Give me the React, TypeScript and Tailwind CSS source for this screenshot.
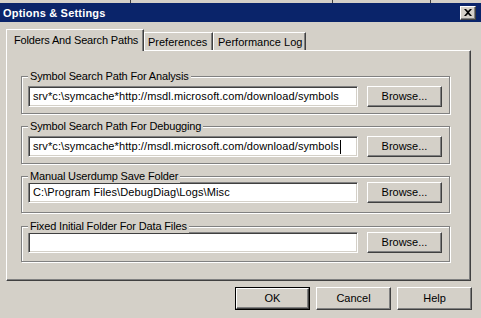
import { ReactNode } from "react";

const raised =
  "border border-t-white border-l-white border-r-[#404040] border-b-[#404040] shadow-[inset_-1px_-1px_0_#808080]";
const sunken =
  "border border-t-[#808080] border-l-[#808080] border-r-white border-b-white shadow-[inset_1px_1px_0_#404040,inset_-1px_-1px_0_#d4d0c8]";

const Button = ({ children, className = "" }: { children: ReactNode; className?: string }) => (
  <div className={`flex items-center justify-center bg-[#d4d0c8] text-black ${raised} ${className}`}>
    {children}
  </div>
);

type GroupProps = {
  label: string;
  value?: string;
  caret?: boolean;
  className: string;
};

const Group = ({ label, value, caret, className }: GroupProps) => (
  <div
    className={`relative ml-[14px] w-[429px] border border-[#808080] px-[6px] pr-[7px] shadow-[inset_1px_1px_0_#fff,1px_1px_0_#fff] ${className}`}
  >
    <span className="absolute left-[6px] -top-[7px] bg-[#d4d0c8] px-[2px] leading-[13px] tracking-[-0.15px]">
      {label}
    </span>
    <div className="flex items-center gap-[9px]">
      <div className={`flex h-[21px] w-[330px] items-center bg-white pl-[4px] ${sunken}`}>
        <span className="whitespace-nowrap tracking-[0.1px]">{value}</span>
        {caret && <span className="ml-[1px] h-[14px] w-px bg-black" />}
      </div>
      <Button className="h-[21px] w-[75px]">Browse...</Button>
    </div>
  </div>
);

export default function App() {
  return (
    <div className="h-[318px] w-[481px] overflow-hidden bg-[#d4d0c8] font-['Liberation_Sans',Arial,sans-serif] text-[11px] leading-[13px] text-black">
      {/* strip above the caption */}
      <div className="flex h-[3px]">
        <span className="ml-[130px] w-px bg-[#404040]" />
        <span className="ml-[201px] w-px bg-[#404040]" />
        <span className="ml-[97px] w-px bg-[#404040]" />
      </div>

      {/* caption */}
      <div className="flex h-[19px] items-center justify-between bg-[#0a246a] pl-[3px] pr-[5px]">
        <span className="pt-px font-bold tracking-[0.2px] text-white">Options &amp; Settings</span>
        <div className={`flex h-[14px] w-[16px] items-center justify-center bg-[#d4d0c8] ${raised}`}>
          <svg width="8" height="7" viewBox="0 0 8 7">
            <path d="M0 0h2l2 2 2-2h2L5 3.5 8 7H6L4 5 2 7H0l3-3.5z" fill="#000" />
          </svg>
        </div>
      </div>

      {/* tabs */}
      <div className="ml-[6px] mt-[7px] w-[465px]">
        <div className="flex h-[21px] items-end">
          <div className="relative z-10 -mb-px flex h-[22px] w-[138px] items-center border-l border-t border-r border-l-white border-t-white border-r-[#404040] bg-[#d4d0c8] pl-[7px] tracking-[-0.15px] shadow-[inset_-1px_0_0_#808080]">
            Folders And Search Paths
          </div>
          <div className="flex h-[18px] w-[69px] items-center border-l border-t border-r border-l-white border-t-white border-r-[#404040] pl-[3px] pt-[1px] shadow-[inset_-1px_0_0_#808080]">
            Preferences
          </div>
          <div className="flex h-[18px] w-[93px] items-center border-l border-t border-r border-l-white border-t-white border-r-[#404040] pl-[4px] pt-[1px] shadow-[inset_-1px_0_0_#808080]">
            Performance Log
          </div>
        </div>

        <div className="h-[231px] border border-t-white border-l-white border-r-[#404040] border-b-[#404040] pt-[25px] shadow-[inset_-1px_-1px_0_#808080]">
          <Group
            label="Symbol Search Path For Analysis"
            value="srv*c:\symcache*http://msdl.microsoft.com/download/symbols"
            className="pt-[9px] pb-[6px]"
          />
          <Group
            label="Symbol Search Path For Debugging"
            value="srv*c:\symcache*http://msdl.microsoft.com/download/symbols"
            caret
            className="mt-[12px] pt-[9px] pb-[6px]"
          />
          <Group
            label="Manual Userdump Save Folder"
            value="C:\Program Files\DebugDiag\Logs\Misc"
            className="mt-[12px] pt-[5px] pb-[9px]"
          />
          <Group label="Fixed Initial Folder For Data Files" className="mt-[13px] pt-[5px] pb-[8px]" />
        </div>
      </div>

      {/* dialog buttons */}
      <div className="mt-[6px] flex justify-end gap-[6px] pr-[9px]">
        <div className="h-[23px] w-[75px] border border-black">
          <Button className="h-full w-full">OK</Button>
        </div>
        <Button className="h-[23px] w-[75px]">Cancel</Button>
        <Button className="h-[23px] w-[75px]">Help</Button>
      </div>
    </div>
  );
}
